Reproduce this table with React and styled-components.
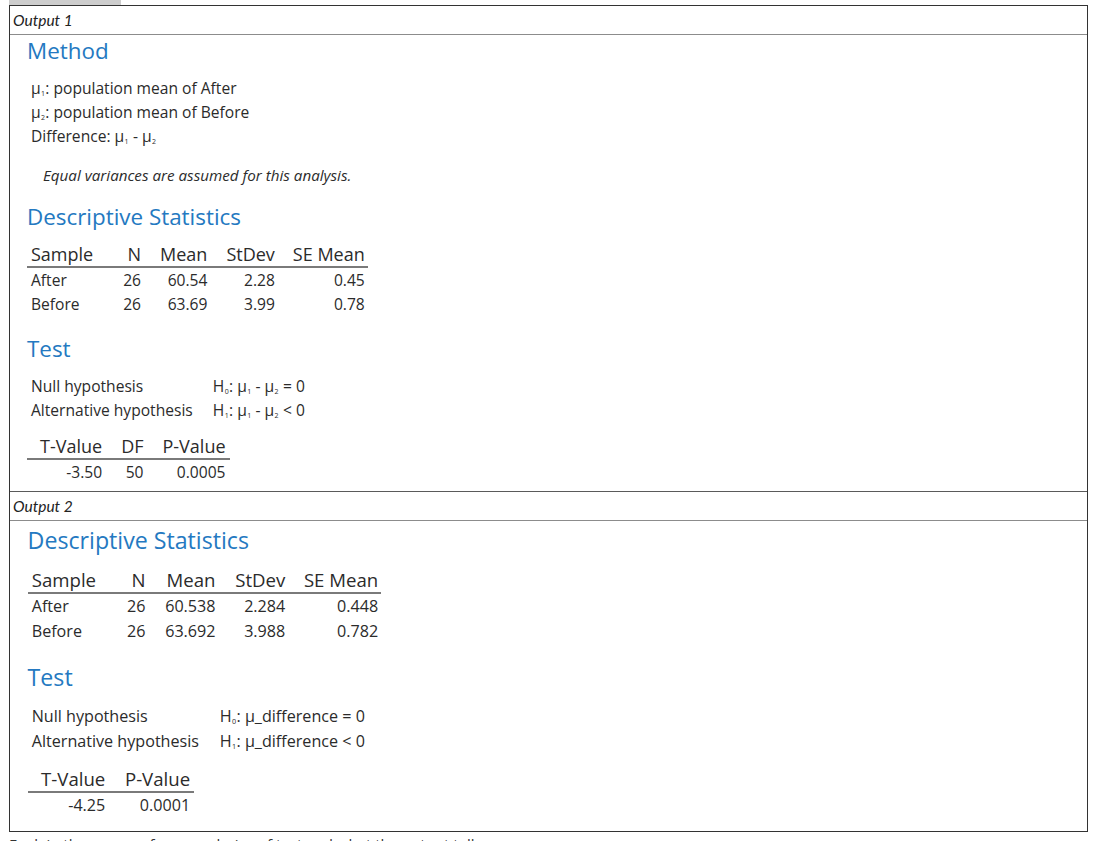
import React from "react"
import styled, { createGlobalStyle } from "styled-components"

const GlobalStyle = createGlobalStyle`
  html, body {
    margin: 0;
    padding: 0;
    background: #ffffff;
    overflow: hidden;
  }
  body {
    font-family: "Open Sans", "Liberation Sans", sans-serif;
    color: #2b2b2b;
  }
`

// every size inside an output is scaled by --k (Output 2 is drawn slightly larger)
const px = (n) => `calc(${n}px * var(--k))`

const Page = styled.div`
  width: 1079px;
  margin-left: 9px;
`

const Tab = styled.div`
  width: 112px;
  height: 5px;
  background: #cdcdcd;
`

const Frame = styled.div`
  border: 1px solid #333333;
`

const OutputBlock = styled.div`
  & + & {
    border-top: 1px solid #5a5a5a;
  }
`

const OutputHeader = styled.div`
  height: 28px;
  display: flex;
  align-items: center;
  padding-left: 3px;
  font-family: Lato, "Open Sans", sans-serif;
  font-style: italic;
  font-size: 15.5px;
  color: #222;
  border-bottom: 1px solid #8c8c8c;
`

const OutputBody = styled.div`
  --k: ${(p) => p.$k};
  --lh: ${(p) => p.$lh}px;
  font-size: ${px(15.6)};
  line-height: var(--lh);
  padding: ${(p) => px(p.$top)} 0 ${(p) => px(p.$bottom)} ${px(17)};
`

const Heading = styled.div`
  font-size: ${px(22.4)};
  line-height: ${px(28)};
  color: #2479c1;
  margin-bottom: ${px(11)};
`

const Lines = styled.div`
  padding-left: ${px(4)};
`

const Note = styled.div`
  font-style: italic;
  font-size: ${px(15.2)};
  padding-left: ${px(16)};
  margin-top: ${px(15)};
  margin-bottom: ${px(16)};
`

const Sub = styled.sub`
  font-size: 0.45em;
  vertical-align: -0.3em;
  line-height: 0;
  margin: 0 0.05em;
`

const Table = styled.table`
  border-collapse: collapse;
  border-spacing: 0;
  margin-top: ${(p) => px(p.$before || 0)};
  margin-bottom: ${(p) => px(p.$after || 0)};
`

const Th = styled.th`
  font-weight: 400;
  font-size: ${px(18)};
  line-height: var(--lh);
  white-space: nowrap;
  text-align: ${(p) => (p.$left ? "left" : "right")};
  padding: 0 ${(p) => px(p.$pr || 0)} 0 ${(p) => px(p.$pl)};
  border-bottom: 2px solid #7a7a7a;
`

const Td = styled.td`
  white-space: nowrap;
  line-height: var(--lh);
  text-align: ${(p) => (p.$left ? "left" : "right")};
  padding: 0 ${(p) => px(p.$pr || 0)} 0 ${(p) => px(p.$pl)};
`

const Prompt = styled.div`
  font-size: 15px;
  line-height: 20px;
  margin-top: 2px;
  color: #333;
`

const Mu = ({ n }) => (
  <>
    μ<Sub>{n}</Sub>
  </>
)

const DescTable = ({ rows }) => (
  <Table $before={1} $after={19}>
    <thead>
      <tr>
        <Th $left $pl={4} $pr={11}>Sample</Th>
        <Th $pl={19}>N</Th>
        <Th $pl={19}>Mean</Th>
        <Th $pl={19}>StDev</Th>
        <Th $pl={18} $pr={3}>SE Mean</Th>
      </tr>
    </thead>
    <tbody>
      {rows.map((r) => (
        <tr key={r[0]}>
          <Td $left $pl={4} $pr={11}>{r[0]}</Td>
          <Td $pl={19}>{r[1]}</Td>
          <Td $pl={19}>{r[2]}</Td>
          <Td $pl={19}>{r[3]}</Td>
          <Td $pl={18} $pr={3}>{r[4]}</Td>
        </tr>
      ))}
    </tbody>
  </Table>
)

const Hypotheses = ({ nullH, altH }) => (
  <Table $after={12}>
    <tbody>
      <tr>
        <Td $left $pl={4} $pr={20}>Null hypothesis</Td>
        <Td $left $pl={0}>{nullH}</Td>
      </tr>
      <tr>
        <Td $left $pl={4} $pr={20}>Alternative hypothesis</Td>
        <Td $left $pl={0}>{altH}</Td>
      </tr>
    </tbody>
  </Table>
)

const ResultTable = ({ heads, values }) => (
  <Table>
    <thead>
      <tr>
        {heads.map((h, i) => (
          <Th key={h} $pl={i === 0 ? 13 : 19} $pr={i === heads.length - 1 ? 4 : 0}>
            {h}
          </Th>
        ))}
      </tr>
    </thead>
    <tbody>
      <tr>
        {values.map((v, i) => (
          <Td key={i} $pl={i === 0 ? 13 : 19} $pr={i === values.length - 1 ? 4 : 0}>
            {v}
          </Td>
        ))}
      </tr>
    </tbody>
  </Table>
)

export default function App() {
  return (
    <Page>
      <GlobalStyle />
      <Tab />
      <Frame>
        <OutputBlock>
          <OutputHeader>Output 1</OutputHeader>
          <OutputBody $k={1} $lh={24} $top={2} $bottom={7}>
            <Heading>Method</Heading>
            <Lines>
              <div>
                <Mu n="1" />: population mean of After
              </div>
              <div>
                <Mu n="2" />: population mean of Before
              </div>
              <div>
                Difference: <Mu n="1" /> - <Mu n="2" />
              </div>
            </Lines>
            <Note>Equal variances are assumed for this analysis.</Note>
            <Heading>Descriptive Statistics</Heading>
            <DescTable
              rows={[
                ["After", "26", "60.54", "2.28", "0.45"],
                ["Before", "26", "63.69", "3.99", "0.78"],
              ]}
            />
            <Heading>Test</Heading>
            <Hypotheses
              nullH={
                <>
                  H<Sub>0</Sub>: <Mu n="1" /> - <Mu n="2" /> = 0
                </>
              }
              altH={
                <>
                  H<Sub>1</Sub>: <Mu n="1" /> - <Mu n="2" /> &lt; 0
                </>
              }
            />
            <ResultTable
              heads={["T-Value", "DF", "P-Value"]}
              values={["-3.50", "50", "0.0005"]}
            />
          </OutputBody>
        </OutputBlock>
        <OutputBlock>
          <OutputHeader>Output 2</OutputHeader>
          <OutputBody $k={1.035} $lh={25} $top={5} $bottom={13}>
            <Heading>Descriptive Statistics</Heading>
            <DescTable
              rows={[
                ["After", "26", "60.538", "2.284", "0.448"],
                ["Before", "26", "63.692", "3.988", "0.782"],
              ]}
            />
            <Heading>Test</Heading>
            <Hypotheses
              nullH={
                <>
                  H<Sub>0</Sub>: μ_difference = 0
                </>
              }
              altH={
                <>
                  H<Sub>1</Sub>: μ_difference &lt; 0
                </>
              }
            />
            <ResultTable
              heads={["T-Value", "P-Value"]}
              values={["-4.25", "0.0001"]}
            />
          </OutputBody>
        </OutputBlock>
      </Frame>
      <Prompt>Explain the reasons for your choice of test and what the output tells you.</Prompt>
    </Page>
  )
}
